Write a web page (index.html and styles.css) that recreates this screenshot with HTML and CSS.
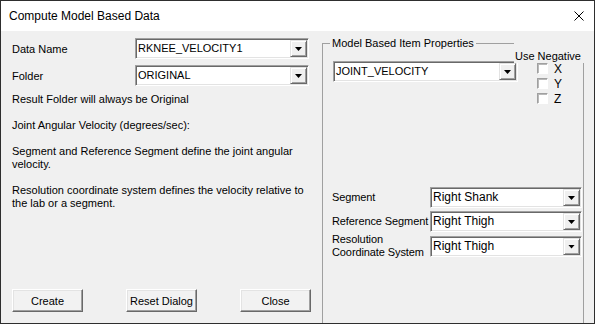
FILE: index.html
```html
<!DOCTYPE html>
<html lang="en">
  <head>
    <meta charset="UTF-8" />
    <meta name="viewport" content="width=device-width, initial-scale=1.0" />
    <title>Compute Model Based Data</title>
    <link rel="stylesheet" href="styles.css">
  </head>
  <body>
    <div class="window">
      <!-- Title bar -->
      <div class="titlebar">
        <span class="title">Compute Model Based Data</span>
        <svg class="close" width="10" height="10" viewBox="0 0 10 10">
          <path d="M0.5 0.5L9.5 9.5M9.5 0.5L0.5 9.5" stroke="#000" stroke-width="1" fill="none" />
        </svg>
      </div>

      <div class="content">
        <!-- Left column -->
        <div class="left">
          <div class="field-row">
            <span class="field-label">Data Name</span>
            <div class="combo wide"><span class="combo-text">RKNEE_VELOCITY1</span><span class="drop"></span></div>
          </div>
          <div class="field-row">
            <span class="field-label">Folder</span>
            <div class="combo wide"><span class="combo-text">ORIGINAL</span><span class="drop"></span></div>
          </div>

          <p class="note first">Result Folder will always be Original</p>
          <p class="note">Joint Angular Velocity (degrees/sec):</p>
          <p class="note">Segment and Reference Segment define the joint angular velocity.</p>
          <p class="note">Resolution coordinate system defines the velocity relative to the lab or a segment.</p>

          <div class="buttons">
            <button class="btn">Create</button>
            <button class="btn">Reset Dialog</button>
            <button class="btn">Close</button>
          </div>
        </div>

        <!-- Model based item properties -->
        <fieldset class="group">
          <legend>Model Based Item Properties</legend>
          <span class="use-negative">Use Negative</span>

          <div class="group-top">
            <div class="combo joint"><span class="combo-text">JOINT_VELOCITY</span><span class="drop"></span></div>
            <div class="checks">
              <label class="check"><span class="box"></span>X</label>
              <label class="check"><span class="box"></span>Y</label>
              <label class="check"><span class="box"></span>Z</label>
            </div>
          </div>

          <div class="segments">
            <span class="seg-label">Segment</span>
            <div class="combo"><span class="combo-text normal">Right Shank</span><span class="drop"></span></div>
            <span class="seg-label">Reference Segment</span>
            <div class="combo"><span class="combo-text normal">Right Thigh</span><span class="drop"></span></div>
            <span class="seg-label last">Resolution<br />Coordinate System</span>
            <div class="combo last"><span class="combo-text normal">Right Thigh</span><span class="drop"></span></div>
          </div>
        </fieldset>
      </div>
    </div>
  </body>
</html>
```

FILE: styles.css
```css
/* Dialog styles */
body {
  margin: 0;
  font-family: "Liberation Sans", Arial, sans-serif;
  font-size: 11px;
  color: #000;
}

.window {
  width: 595px;
  height: 324px;
  box-sizing: border-box;
  border: 1px solid #2e2e2e;
  background-color: #f0f0f0;
  display: flex;
  flex-direction: column;
  overflow: hidden;
}

.titlebar {
  height: 30px;
  flex: none;
  background-color: #fff;
  display: flex;
  align-items: center;
  justify-content: space-between;
  padding: 0 10px 0 8px;
}

.title {
  font-family: "Liberation Sans", Arial, sans-serif;
  font-size: 12px;
}

.content {
  flex: 1;
  min-height: 0;
  display: flex;
}

/* Left side */
.left {
  width: 321px;
  box-sizing: border-box;
  padding: 7px 11px 11px 11px;
  display: flex;
  flex-direction: column;
}

.field-row {
  display: flex;
  align-items: center;
  height: 21px;
  margin-bottom: 6px;
}

.field-label {
  width: 123px;
}

.note {
  margin: 13px 0 0 0;
  line-height: 13px;
}

.note.first {
  margin-top: 1px;
}

.buttons {
  margin-top: auto;
  display: flex;
  justify-content: space-between;
}

.btn {
  width: 71px;
  height: 23px;
  padding: 0;
  font-family: inherit;
  font-size: 11px;
  color: #000;
  background-color: #f2f2f2;
  border: 1px solid;
  border-color: #fff #696969 #696969 #fff;
  box-shadow: inset -1px -1px #a0a0a0, inset 1px 1px #e3e3e3;
}

/* Combo boxes */
.combo {
  height: 21px;
  width: 152px;
  box-sizing: border-box;
  display: flex;
  background-color: #fff;
  border: 1px solid;
  border-color: #a0a0a0 #fff #fff #a0a0a0;
  padding: 1px;
  box-shadow: inset 1px 1px #696969, inset -1px -1px #e3e3e3;
}

.combo.wide {
  width: 174px;
}

.combo.joint {
  width: 185px;
}

.combo-text {
  flex: 1;
  padding-left: 1px;
  line-height: 16px;
  white-space: nowrap;
  overflow: hidden;
}

.combo-text.normal {
  font-size: 12px;
}

.drop {
  width: 17px;
  box-sizing: border-box;
  background-color: #f0f0f0;
  border: 1px solid;
  border-color: #e3e3e3 #696969 #696969 #e3e3e3;
  box-shadow: inset 1px 1px #fff, inset -1px -1px #a0a0a0;
  display: flex;
  align-items: center;
  justify-content: center;
}

.drop::after {
  content: "";
  width: 7px;
  height: 4px;
  margin-top: 1px;
  background-color: #000;
  clip-path: polygon(0 0, 100% 0, 50% 100%);
}

/* Group box */
.group {
  position: relative;
  margin: 6px 0 0 0;
  width: 262px;
  height: 300px;
  box-sizing: border-box;
  flex: none;
  min-width: 0;
  border: 1px solid #a0a0a0;
  padding: 12px 9px 0 10px;
}

.group legend {
  padding: 0 2px;
  margin-left: -3px;
  line-height: 12px;
}

.use-negative {
  position: absolute;
  top: -7px;
  right: -1px;
  padding: 8px 3px 1px 1px;
  line-height: 12px;
  background-color: #f0f0f0;
}

.group-top {
  display: flex;
  align-items: flex-start;
}

.checks {
  margin-left: 19px;
  font-size: 12px;
}

.check {
  display: flex;
  align-items: center;
  height: 15px;
}

.box {
  width: 11px;
  height: 11px;
  box-sizing: border-box;
  margin-right: 6px;
  background-color: #fff;
  border: 1px solid;
  border-color: #a0a0a0 #fff #fff #a0a0a0;
  box-shadow: inset 1px 1px #b9b9b9;
}

.segments {
  margin-top: 81px;
  margin-left: -1px;
  display: grid;
  grid-template-columns: 98px 152px;
  grid-auto-rows: 21px;
  row-gap: 3px;
  align-items: center;
}

.seg-label {
  line-height: 13px;
  white-space: nowrap;
  letter-spacing: -0.1px;
}

.seg-label.last,
.combo.last {
  margin-top: 1px;
}
```
